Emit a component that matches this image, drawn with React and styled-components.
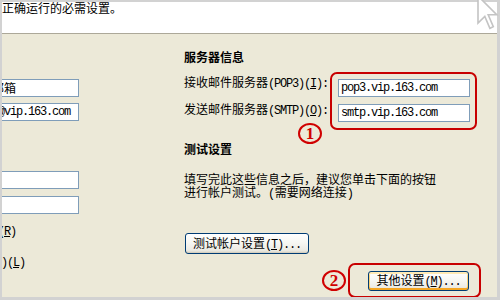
import React from 'react'
import styled, { createGlobalStyle } from 'styled-components'

const GlobalStyle = createGlobalStyle`
  html, body {
    margin: 0;
    padding: 0;
    background: #fff;
  }
  body {
    font-family: "Noto Sans CJK SC", "Liberation Sans", sans-serif;
    font-size: 12px;
    color: #000;
  }
`;

const Page = styled.div`
  position: relative;
  width: 500px;
  height: 300px;
`;

const Frame = styled.div`
  box-sizing: border-box;
  width: 500px;
  height: 300px;
  border-style: solid;
  border-color: #d2d2d2;
  border-width: 2px 3px 3px 2px;
  display: flex;
  flex-direction: column;
  overflow: hidden;
`;

const Header = styled.div`
  flex: 0 0 31px;
  background: #fff;
  border-bottom: 1px solid #aca899;
`;

const HeaderText = styled.div`
  line-height: 12px;
  white-space: nowrap;
`;

const Body = styled.div`
  flex: 1;
  background: #ece9d8;
  display: grid;
  grid-template-columns: 77px 1fr;
  column-gap: 105px;
`;

const LeftCol = styled.div`
  display: flex;
  flex-direction: column;
  align-items: flex-start;
`;

const RightCol = styled.div`
  display: flex;
  flex-direction: column;
  align-items: flex-start;
`;

const Latin = styled.span`
  font-family: "Liberation Mono", monospace;
  font-size: 12px;
  letter-spacing: ${p => (p.$loose ? '-0.4px' : '-1.2px')};
`;

const TextBox = styled.div`
  box-sizing: border-box;
  height: 18px;
  width: ${p => p.$width}px;
  margin-top: ${p => p.$top || 0}px;
  margin-left: ${p => p.$shift || 0}px;
  padding-left: ${p => p.$pad || 1}px;
  background: #fff;
  border: 1px solid #7f9db9;
  display: flex;
  align-items: center;
  white-space: nowrap;
  overflow: hidden;
  line-height: 12px;
`;

const OptionText = styled.div`
  margin-top: ${p => p.$top}px;
  margin-left: ${p => p.$shift || 0}px;
  line-height: 12px;
  white-space: nowrap;
`;

const Heading = styled.div`
  margin-top: ${p => p.$top}px;
  font-weight: 700;
  line-height: 12px;
  white-space: nowrap;
`;

const ServerBlock = styled.div`
  position: relative;
  display: flex;
  margin-top: 9px;
`;

const LabelStack = styled.div`
  width: 146px;
  padding-top: 4px;
  display: flex;
  flex-direction: column;
  gap: 13px;
`;

const Label = styled.div`
  line-height: 12px;
  white-space: nowrap;
`;

const Highlight = styled.div`
  box-sizing: border-box;
  border: 2px solid #c80000;
  border-radius: 7px;
  display: flex;
  flex-direction: column;
  gap: ${p => p.$gap || 0}px;
  padding: ${p => p.$pad};
  width: ${p => p.$width}px;
  height: ${p => p.$height}px;
`;

const Marker = styled.div`
  box-sizing: border-box;
  width: 24px;
  height: 21px;
  border: 2px solid #d00000;
  border-radius: 50%;
  color: #d00000;
  font-family: "Liberation Serif", serif;
  font-weight: 700;
  font-size: 17px;
  line-height: 17px;
  text-align: center;
  ${p => p.$over && `
    position: absolute;
    left: ${p.$left}px;
    top: ${p.$y}px;
  `}
`;

const Para = styled.p`
  margin: 17px 0 0;
  line-height: 13px;
  white-space: nowrap;
`;

const Button = styled.button`
  box-sizing: border-box;
  margin: ${p => p.$margin || 0};
  width: ${p => p.$width}px;
  height: ${p => p.$height}px;
  padding: 0;
  font-family: "Noto Sans CJK SC", sans-serif;
  font-size: 12px;
  line-height: 12px;
  color: #000;
  border: 1px solid #003c74;
  border-radius: 3px;
  background: linear-gradient(180deg, #ffffff 0%, #f7f7f3 45%, #ecebe4 85%, #d8d4c6 100%);
  box-shadow: ${p => p.$hot
    ? 'inset 0 2px 0 #ffeab5, inset 0 -2px 0 #f5a623, inset 1px 0 0 #fcd37a, inset -1px 0 0 #fcd37a'
    : 'inset 0 -1px 0 #d6d0c0'};
  white-space: nowrap;
`;

const BottomRow = styled.div`
  display: flex;
  align-items: center;
  gap: 2px;
  margin: 9px 0 0 138px;
`;

const Cursor = styled.svg`
  position: absolute;
  left: 470px;
  top: 0;
`;

export default function App() {
  return (
    <Page>
      <GlobalStyle />
      <Frame>
        <Header>
          <HeaderText>正确运行的必需设置。</HeaderText>
        </Header>
        <Body>
          <LeftCol>
            <TextBox $width={89} $shift={-12} $top={45} $pad={1}>邮箱</TextBox>
            <TextBox $width={89} $shift={-12} $top={6} $pad={7}>
              <Latin>@vip.163.com</Latin>
            </TextBox>
            <TextBox $width={89} $shift={-12} $top={50} />
            <TextBox $width={89} $shift={-12} $top={7} />
            <OptionText $top={10} $shift={-4}><Latin>(<u>R</u>)</Latin></OptionText>
            <OptionText $top={17} $shift={-1}><Latin>)(<u>L</u>)</Latin></OptionText>
          </LeftCol>
          <RightCol>
            <Heading $top={17}>服务器信息</Heading>
            <ServerBlock>
              <LabelStack>
                <Label>接收邮件服务器<Latin>(POP3)(<u>I</u>):</Latin></Label>
                <Label>发送邮件服务器<Latin>(SMTP)(<u>O</u>):</Latin></Label>
              </LabelStack>
              <Highlight $width={147} $height={58} $gap={7} $pad="5px 0 0 6px">
                <TextBox $width={132} $pad={2}><Latin>pop3.vip.163.com</Latin></TextBox>
                <TextBox $width={132} $pad={2}><Latin>smtp.vip.163.com</Latin></TextBox>
              </Highlight>
              <Marker $over $left={114} $y={51}>1</Marker>
            </ServerBlock>
            <Heading $top={13}>测试设置</Heading>
            <Para>
              填写完此这些信息之后，建议您单击下面的按钮<br />
              进行帐户测试。<Latin $loose>(</Latin>需要网络连接<Latin $loose>)</Latin>
            </Para>
            <Button $width={124} $height={21} $margin="32px 0 0 1px">
              测试帐户设置<Latin>(<u>T</u>)...</Latin>
            </Button>
            <BottomRow>
              <Marker>2</Marker>
              <Highlight $width={133} $height={35} $pad="6px 0 0 18px">
                <Button $width={101} $height={20} $hot>
                  其他设置<Latin>(<u>M</u>)...</Latin>
                </Button>
              </Highlight>
            </BottomRow>
          </RightCol>
        </Body>
      </Frame>
      <Cursor width="30" height="32" viewBox="0 0 30 32">
        <polygon
          points="8,-4 8,23 14.8,16.4 19.9,28.3 23.3,26.6 18.2,14.7 26.7,14.7"
          fill="#fff"
          stroke="#c4c4c4"
          strokeWidth="1.6"
          strokeLinejoin="miter"
        />
      </Cursor>
    </Page>
  )
}
